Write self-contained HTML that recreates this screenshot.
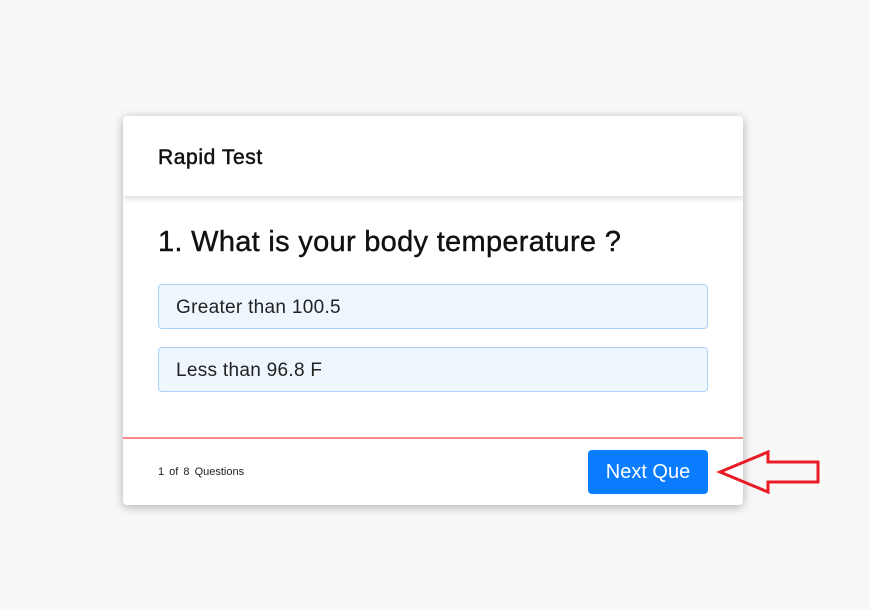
<!DOCTYPE html>
<html><head><style>
body{margin:0;width:870px;height:610px;background:#f8f8f8;font-family:"Liberation Sans",sans-serif;position:relative;overflow:hidden}
.card{position:absolute;left:123px;top:116px;width:620px;height:389px;background:#fff;border-radius:4px;box-shadow:0 2px 10px rgba(0,0,0,.3);overflow:hidden}
.hd{position:absolute;left:0;top:0;width:620px;height:80px;box-shadow:0 3px 5px rgba(0,0,0,.12);background:#fff}
.hd span{position:absolute;left:35px;top:30px;font-size:21px;color:#111;letter-spacing:.6px;-webkit-text-stroke:.5px #111}
.q{position:absolute;left:35px;top:110px;font-size:29px;color:#111;letter-spacing:.3px;-webkit-text-stroke:.4px #111}
.opt{position:absolute;left:35px;width:548px;height:43px;background:#eef6fe;border:1px solid #a9d3fb;border-radius:4px;font-size:19px;color:#222;line-height:45px;text-indent:17px;letter-spacing:.3px}
.line{position:absolute;left:0;top:321px;width:620px;height:2px;background:#f88a8a}
.ft{position:absolute;left:35px;top:350px;font-size:11px;color:#222;word-spacing:2px}
.btn{position:absolute;left:465px;top:334px;width:120px;height:44px;background:#0a7cff;border-radius:4px;color:#fff;font-size:20px;line-height:45px;text-align:center}
</style></head><body>
<div class="card">
<div class="hd"><span>Rapid Test</span></div>
<div class="q">1. What is your body temperature ?</div>
<div class="opt" style="top:168px">Greater than 100.5</div>
<div class="opt" style="top:231px">Less than 96.8 F</div>
<div class="line"></div>
<div class="ft">1 of 8 Questions</div>
<div class="btn">Next Que</div>
</div>
<svg style="position:absolute;left:0;top:0" width="870" height="610"><polygon points="720,472 768,452 768,462 818,462 818,482 768,482 768,492" fill="none" stroke="#e81c24" stroke-width="3"/></svg>
</body></html>
